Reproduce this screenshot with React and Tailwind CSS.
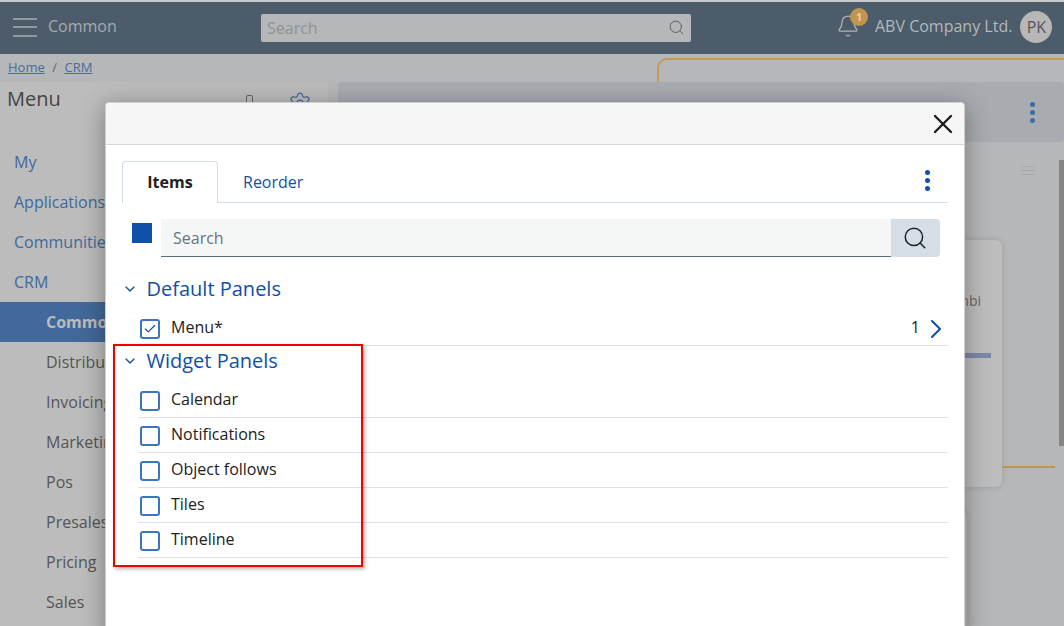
import React from 'react';
import { ChevronDown, ChevronRight, Search, Bell, X, Check, Settings } from 'lucide-react';

const topLinks = ['My', 'Applications', 'Communities', 'CRM'];
const crmItems = ['Distribution', 'Invoicing', 'Marketing', 'Pos', 'Presales', 'Pricing', 'Sales'];
const widgets = ['Calendar', 'Notifications', 'Object follows', 'Tiles', 'Timeline'];

const Kebab = ({ className }) => (
    <div className={`flex flex-col gap-[3px] ${className}`}>
        <span className="w-[5px] h-[5px] rounded-full bg-current" />
        <span className="w-[5px] h-[5px] rounded-full bg-current" />
        <span className="w-[5px] h-[5px] rounded-full bg-current" />
    </div>
);

const PanelRow = ({ label, checked, children }) => (
    <div className="flex items-center h-[35px] ml-[16px] pl-[2px] border-b border-[#dfe1e6] text-[16px] text-[#222]">
        <span className={`w-[20px] h-[20px] rounded-[3px] border-2 border-[#3b76bd] flex items-center justify-center ${checked ? 'mt-[2px]' : 'mt-[1px]'}`}>
            {checked && <Check size={14} strokeWidth={2} className="text-[#0f4fa8]" />}
        </span>
        <span className="ml-[11px] -mt-[3px]">{label}</span>
        {children}
    </div>
);

const SectionHead = ({ label, className }) => (
    <div className={`flex items-center text-[#0f4fa8] ${className}`}>
        <ChevronDown size={16} strokeWidth={2} />
        <span className="ml-[8.5px] text-[20px] leading-[28px]">{label}</span>
    </div>
);

const App = () => {
    return (
        <div className="relative w-[1064px] h-[626px] overflow-hidden bg-[#b6b7b9] font-['Open_Sans',sans-serif]">
            {/* Top bar */}
            <header className="flex items-center h-[54px] pb-[2px] border-t-2 border-[#c9c9c9] bg-[#4d5c6a]">
                <div className="flex flex-col gap-[6.5px] ml-[13px] w-[24px]">
                    <span className="h-[2px] bg-[#8f979f]" />
                    <span className="h-[2px] bg-[#8f979f]" />
                    <span className="h-[2px] bg-[#8f979f]" />
                </div>
                <span className="ml-[11px] -mt-[3px] w-[213px] text-[16px] text-[#a4abb1]">Common</span>
                <div className="flex items-center justify-between w-[430px] h-[28px] mt-[1px] px-[6px] rounded-[2px] bg-[#b6b7b9]">
                    <span className="text-[16px] text-[#8f9295]">Search</span>
                    <Search size={17} strokeWidth={1.25} className="text-[#555]" />
                </div>
                <div className="relative ml-[145px] -mt-[2px]">
                    <Bell size={24} strokeWidth={1.25} className="text-[#b0b4b8]" />
                    <span className="absolute -top-[6px] left-[14px] flex items-center justify-center w-[18px] h-[18px] rounded-full bg-[#bf9550] text-[10px] font-bold text-[#e3d3b5]">1</span>
                </div>
                <span className="ml-[15px] -mt-[3px] text-[16px] text-[#b3b8bc]">ABV Company Ltd.</span>
                <span className="flex items-center justify-center ml-[8px] w-[32px] h-[32px] rounded-full bg-[#b7b7b7] text-[16px] text-[#555]">PK</span>
            </header>

            {/* Breadcrumb */}
            <div className="flex items-center h-[28px] pl-[8px] text-[13px] text-[#4a6c98]">
                <span className="underline">Home</span>
                <span className="mx-[7.5px] text-[#666]">/</span>
                <span className="underline">CRM</span>
            </div>

            {/* Page behind the dialog */}
            <div className="flex h-[544px]">
                <aside className="w-[328px] shrink-0 bg-[#bcbcbc]">
                    <div className="flex items-start h-[60px] pl-[7px] text-[20px] leading-[34px] text-[#444]">
                        <span>Menu</span>
                        <span className="ml-[185px] mt-[13px] w-[7px] h-[14px] rounded-[2px] border border-[#666]" />
                        <Settings size={24} strokeWidth={1.25} className="ml-[35px] mt-[9px] text-[#4a6c98]" />
                    </div>
                    {topLinks.map((link) => (
                        <div key={link} className="flex items-center h-[40px] pl-[14px] text-[16px] text-[#41699c]">{link}</div>
                    ))}
                    <div className="flex items-center h-[40px] pl-[46px] bg-[#42699a] text-[16px] font-bold text-[#bcbcbc]">Common</div>
                    {crmItems.map((item) => (
                        <div key={item} className="flex items-center h-[40px] pl-[46px] text-[16px] text-[#555]">{item}</div>
                    ))}
                </aside>
                <main className="relative flex-1 ml-[10px]">
                    <div className="flex items-center justify-end h-[60px] pr-[29px] rounded-[4px] bg-[#a8abb0]">
                        <Kebab className="text-[#3f6ba3]" />
                    </div>
                    <div className="absolute right-0 top-[78px] w-[5px] h-[286px] bg-[#858585]" />
                    <div className="absolute right-[29px] top-[84px] flex flex-col gap-[3px] w-[14px]">
                        <span className="h-[1px] bg-[#a9a9a9]" />
                        <span className="h-[1px] bg-[#a9a9a9]" />
                        <span className="h-[1px] bg-[#a9a9a9]" />
                    </div>
                    {/* Dashboard card */}
                    <div className="absolute right-[62px] top-[158px] w-[300px] h-[247px] rounded-[6px] bg-[#bdbdbd] shadow-[0_0_6px_rgba(0,0,0,0.15)]">
                        <div className="mt-[50px] pr-[21px] text-right text-[14px] text-[#666]">Combi</div>
                        <div className="mt-[42px] ml-auto mr-[11px] w-[200px] h-[5px] bg-[#7b89a9]" />
                    </div>
                    <div className="absolute right-[9px] top-[384px] w-[53px] h-[2px] bg-[#bf9550]" />
                    <div className="absolute right-[97px] top-[428px] w-[200px] h-[120px] rounded-[6px] bg-[#bdbdbd] shadow-[0_0_6px_rgba(0,0,0,0.15)]" />
                </main>
            </div>

            {/* Highlight outline peeking out behind the page header */}
            <div className="absolute left-[657px] top-[58px] w-[420px] h-[24px] rounded-t-[10px] border-2 border-b-0 border-[#c29a58]" />

            {/* Dialog */}
            <div className="absolute left-[105px] top-[102px] w-[860px] h-[540px] rounded-[4px] border border-[#cfcfcf] bg-white shadow-[0_4px_24px_rgba(0,0,0,0.35)]">
                <div className="flex items-center justify-end h-[42px] pr-[5px] rounded-t-[4px] border-b border-[#d6d6d6] bg-[#f6f6f6]">
                    <X size={32} strokeWidth={1.75} className="text-[#1c1c1c]" />
                </div>
                <div className="pl-[16px] pr-[16px]">
                    {/* Tabs */}
                    <div className="flex items-end justify-between h-[58px] border-b border-[#d3deea]">
                        <div className="flex items-end">
                            <div className="flex items-center justify-center w-[96px] h-[42px] pb-[2px] -mb-[1px] rounded-t-[4px] border border-b-0 border-[#d3deea] bg-white text-[16px] font-bold text-[#222]">Items</div>
                            <div className="flex items-center h-[42px] pt-[2px] ml-[25px] text-[16px] text-[#0f4fa8]">Reorder</div>
                        </div>
                        <Kebab className="mr-[18px] mb-[11px] text-[#0f4fa8]" />
                    </div>
                    {/* Search */}
                    <div className="flex items-start mt-[16px] ml-[10px] mr-[8px]">
                        <span className="w-[20px] h-[20px] mt-[4px] bg-[#0f4fa8]" />
                        <div className="flex items-center flex-1 h-[38px] ml-[9px] pl-[12px] border-b border-[#5f6b7a] bg-[#f5f7f7] text-[16px] text-[#6b7280]">Search</div>
                        <div className="flex items-center justify-center w-[49px] h-[38px] pr-[2px] rounded-r-[4px] bg-[#d5dde6]">
                            <Search size={26} strokeWidth={1.4} className="text-[#222]" />
                        </div>
                    </div>
                    <SectionHead label="Default Panels" className="mt-[18px] mb-[8px]" />
                    <PanelRow label="Menu*" checked>
                        <span className="ml-auto -mt-[3px] text-[#222]">1</span>
                        <ChevronRight size={32} strokeWidth={1.5} className="-mr-[4px] mt-[1px] text-[#0f4fa8]" />
                    </PanelRow>
                    <SectionHead label="Widget Panels" className="h-[30px] mb-[7px]" />
                    {widgets.map((w) => (
                        <PanelRow key={w} label={w} />
                    ))}
                </div>
            </div>

            {/* Red annotation around the widget group */}
            <div className="absolute left-[113px] top-[344px] w-[250px] h-[223px] border-[2px] border-[#f00000] shadow-[2px_2px_4px_rgba(0,0,0,0.3)]" />
        </div>
    );
};

export default App;
